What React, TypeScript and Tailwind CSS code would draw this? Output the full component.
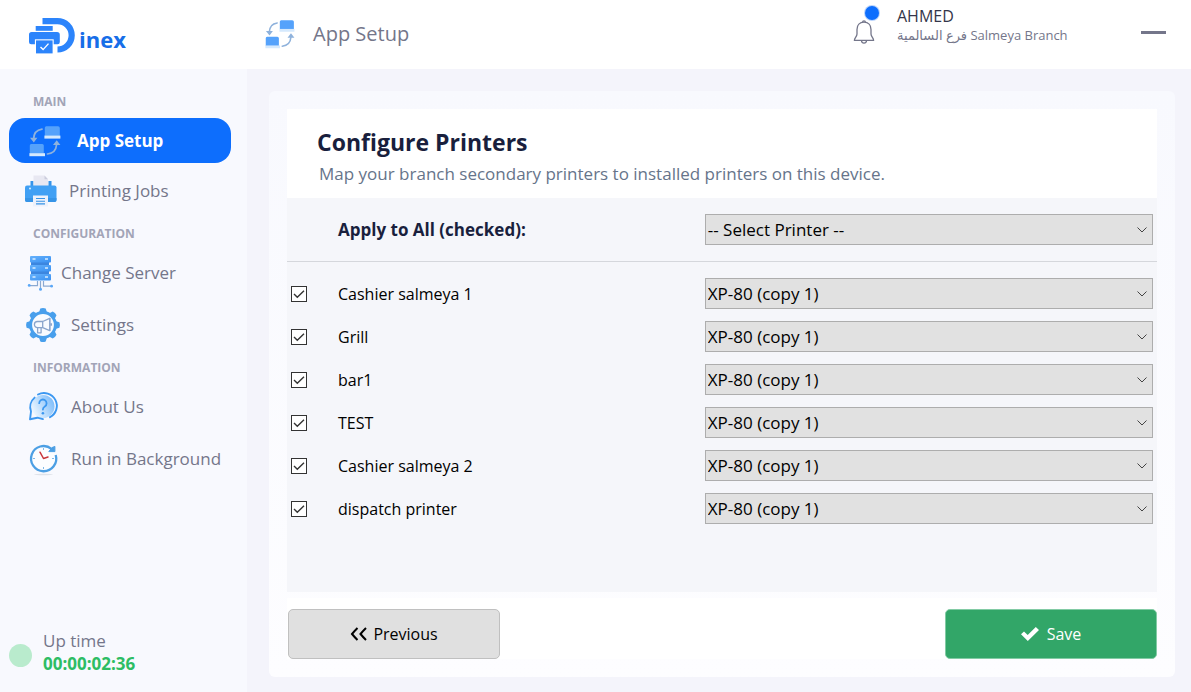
import React from 'react';

type IconProps = { className?: string };

function LogoMark({ className }: IconProps) {
  return (
    <svg viewBox="0 0 46 36" className={className} aria-hidden="true">
      <path d="M13.5 0H28.5a17.3 17.3 0 0 1 0 34.6V28.4a11.1 11.1 0 0 0 0-22.2H13.5Z" fill="#2c84fb" />
      <rect x="6.7" y="8" width="17" height="4.8" fill="#2c84fb" />
      <path d="M3 14H28a2.8 2.8 0 0 1 2.8 2.8V24a2.2 2.2 0 0 1-2.2 2.2H2.2A2.2 2.2 0 0 1 0 24V16.8A2.8 2.8 0 0 1 3 14Z" fill="#2c84fb" />
      <rect x="5.9" y="21.3" width="18.8" height="15" fill="#fff" />
      <rect x="7" y="22.4" width="16.6" height="13" fill="#2c84fb" />
      <path d="m11.5 29 2.6 2.6 5.4-6" fill="none" stroke="#fff" strokeWidth="1.4" />
    </svg>
  );
}

function TransferIcon({ className }: IconProps) {
  return (
    <svg viewBox="0 0 32 32" className={className} aria-hidden="true">
      <path d="M17 1.200h12a1.800 1.800 0 0 1 1.800 1.800v8H15.800V3A1.800 1.800 0 0 1 17 1.200Z" fill="#55a2fb" />
      <rect x="15.400" y="10.600" width="16" height="3" fill="#d5e9fd" />
      <path d="M2.200 19h11a1.600 1.600 0 0 1 1.600 1.600v8.200H.8v-8.200A1.600 1.600 0 0 1 2.200 19Z" fill="#55a2fb" />
      <rect x=".4" y="28.200" width="15.600" height="3" fill="#d5e9fd" />
      <path d="M13 4.200C7.600 5 4.800 8 4.600 14M18.400 29C24 28.400 27.200 25 27.600 19.500" fill="none" stroke="#8fb2dc" strokeWidth="1.700" strokeLinecap="round" />
      <path d="M1 12.800h7.400L4.800 17.600ZM24 20h7.400l-3.700-4.800Z" fill="#8fb2dc" />
    </svg>
  );
}

function PrinterIcon({ className }: IconProps) {
  return (
    <svg viewBox="0 0 32 32" className={className} aria-hidden="true">
      <path d="M5.500 6h3v5h-3ZM23.500 6h3v5h-3Z" fill="#3594ea" />
      <path d="M8.500.500h11L23 4.200V12H8.500Z" fill="#e8e8f2" />
      <path d="M19.500.500 23 4.200h-3.500Z" fill="#cccddd" />
      <rect x="0" y="10.500" width="31.500" height="16.500" rx="2" fill="#41a0f4" />
      <path d="M0 23h31.500v2a2 2 0 0 1-2 2H2a2 2 0 0 1-2-2Z" fill="#3694e7" />
      <circle cx="5" cy="13.500" r="1" fill="#d9efff" />
      <rect x="8" y="20.500" width="15" height="11" fill="#edf1fb" />
      <path d="M11 23.500h9M11 26.200h9M11 28.900h9" stroke="#3694e7" strokeWidth="1.100" />
    </svg>
  );
}

function ServerIcon({ className }: IconProps) {
  return (
    <svg viewBox="0 0 32 36" className={className} aria-hidden="true">
      <defs>
        <linearGradient id="server-fill" x1="0" x2="1" y1="0" y2="1">
          <stop offset="0" stopColor="#66b2fc" />
          <stop offset="1" stopColor="#3990f2" />
        </linearGradient>
      </defs>
      <path d="M6 5h18v16H6Z" fill="#3c86df" />
      {[1, 10, 19].map((y) => (
        <g key={y}>
          <rect x="5" y={y} width="21" height="6.4" rx="1" fill="url(#server-fill)" />
          <path d={`M7.5 ${y + 3}h3M20 ${y + 3}h3`} stroke="#d5ebff" strokeWidth="1.3" />
        </g>
      ))}
      <path d="M12.5 26v4.6H5M15.5 26v8M18.5 26v5.2H26" fill="none" stroke="#8aa9d2" strokeWidth="1.2" />
      <circle cx="4.2" cy="30.4" r="1.4" fill="#5aa7f7" />
      <circle cx="15.5" cy="34.2" r="1.5" fill="#5aa7f7" />
      <circle cx="26.6" cy="31.2" r="1.4" fill="#5aa7f7" />
    </svg>
  );
}

function SettingsIcon({ className }: IconProps) {
  return (
    <svg viewBox="0 0 36 36" className={className} aria-hidden="true">
      {[0, 45, 90, 135, 180, 225, 270, 315].map((angle) => (
        <path key={angle} d="M14 5.600 15.300 1.600Q18 .6 20.700 1.600L22 5.600Z" fill="#489fec" transform={`rotate(${angle} 18 18)`} />
      ))}
      <circle cx="18" cy="18" r="12.4" fill="#f8fbff" stroke="#489fec" strokeWidth="3" />
      <path d="M12.500 14.500h5.200v6.200h-5.200a3.100 3.100 0 0 1 0-6.200ZM17.700 14.500l7-3.200v12.400l-7-3M25 11v13M12.600 20.800v5h3.500v-5M26.400 16.200v2.600" fill="none" stroke="#8aa5cc" strokeWidth="1.300" strokeLinejoin="round" />
    </svg>
  );
}

function AboutIcon({ className }: IconProps) {
  return (
    <svg viewBox="0 0 36 36" className={className} aria-hidden="true">
      <defs>
        <linearGradient id="about-fill" x1="0" x2="1" y1=".7" y2=".2">
          <stop offset="0" stopColor="#f0f8ff" />
          <stop offset="1" stopColor="#78bafa" />
        </linearGradient>
      </defs>
      <circle cx="18" cy="17.500" r="11.500" fill="url(#about-fill)" />
      <path d="M13 5.500A12.600 12.600 0 0 1 25 28.200M9.600 8.600A12.600 12.600 0 0 0 6 22.500L5 30.300l7.300-1.600 5.700 1.400" fill="none" stroke="#3c98f1" strokeWidth="1.900" strokeLinecap="round" strokeLinejoin="round" />
      <path d="M14.200 14.200a3.700 3.700 0 1 1 5.600 3.200c-1.400.8-1.900 1.600-1.900 3.200" fill="none" stroke="#3c98f1" strokeWidth="1.800" strokeLinecap="round" />
      <circle cx="17.900" cy="24.200" r="1.300" fill="#3c98f1" />
    </svg>
  );
}

function ClockIcon({ className }: IconProps) {
  return (
    <svg viewBox="0 0 36 36" className={className} aria-hidden="true">
      <ellipse cx="18.500" cy="33.500" rx="9.500" ry=".8" fill="#dfe3ea" />
      <circle cx="18.500" cy="17.500" r="12" fill="#fcfdff" />
      <path d="M26.500 7.800a12.600 12.600 0 1 0 4.200 6.200" fill="none" stroke="#4c9fe4" strokeWidth="2.300" />
      <path d="M23.800 10.600 29.900 10.600 29.900 5.400 27 6.600Z" fill="#4c9fe4" stroke="#4c9fe4" />
      <path d="M18.500 7v2M18.500 26v2M8 17.500h2M27 17.500h2" stroke="#80b9e8" strokeWidth="1" />
      <path d="M15 11.200 18.500 17.500l4.500-1.500" fill="none" stroke="#c9373d" strokeWidth="1.500" strokeLinecap="round" strokeLinejoin="round" />
    </svg>
  );
}

function BellIcon({ className }: IconProps) {
  return (
    <svg viewBox="0 0 22 24" className={className} fill="none" stroke="#74768a" strokeWidth="1.3" strokeLinejoin="round" aria-hidden="true">
      <path d="M11 2.200c-4.300 0-7 3-7 7.200V14c0 2.600-2.600 4.200-2.600 6.400h19.200c0-2.200-2.600-3.800-2.600-6.400V9.400c0-4.200-2.700-7.200-7-7.200Z" />
      <path d="M9.600 2.200a1.400 1.400 0 0 1 2.800 0M8.500 20.600a2.500 2.500 0 0 0 5 0" />
    </svg>
  );
}

type NavItem = {
  label: string;
  Icon: React.ComponentType<IconProps>;
  iconClass: string;
  itemClass: string;
  active?: boolean;
};

const sections: { title: string; gapClass: string; items: NavItem[] }[] = [
  {
    title: 'MAIN',
    gapClass: 'gap-[5px]',
    items: [
      { label: 'App Setup', Icon: TransferIcon, iconClass: 'size-8', itemClass: 'pl-5 gap-4', active: true },
      { label: 'Printing Jobs', Icon: PrinterIcon, iconClass: 'size-8', itemClass: 'pl-4 gap-3' },
    ],
  },
  {
    title: 'CONFIGURATION',
    gapClass: 'gap-[7px]',
    items: [
      { label: 'Change Server', Icon: ServerIcon, iconClass: 'w-8 h-9', itemClass: 'pl-4 gap-1' },
      { label: 'Settings', Icon: SettingsIcon, iconClass: 'size-9', itemClass: 'pl-4 gap-2.5' },
    ],
  },
  {
    title: 'INFORMATION',
    gapClass: 'gap-[7px]',
    items: [
      { label: 'About Us', Icon: AboutIcon, iconClass: 'size-9', itemClass: 'pl-4 gap-2.5' },
      { label: 'Run in Background', Icon: ClockIcon, iconClass: 'size-9', itemClass: 'pl-4 gap-2.5' },
    ],
  },
];

const printers = ['Cashier salmeya 1', 'Grill', 'bar1', 'TEST', 'Cashier salmeya 2', 'dispatch printer'];

function PrinterSelect({ id, value }: { id: string; value: string }) {
  return (
    <div className="relative">
      <select
        id={id}
        defaultValue={value}
        className="block h-[31px] w-full appearance-none border border-[#adadad] bg-[#e1e1e1] pr-6 pl-0.5 text-[17px] leading-6 text-black"
      >
        <option>-- Select Printer --</option>
        <option>XP-80 (copy 1)</option>
      </select>
      <svg viewBox="0 0 10 6" className="pointer-events-none absolute top-[13px] right-1.5 h-1.5 w-2.5" fill="none" stroke="#444" aria-hidden="true">
        <path d="M.5.5 5 5 9.500.5" />
      </svg>
    </div>
  );
}

export default function App() {
  return (
    <div className="flex min-h-screen flex-col bg-[#f4f4fb] font-['Open_Sans','Noto_Sans','DejaVu_Sans',sans-serif] text-[#74768a]">
      <header className="flex h-[69px] items-start bg-white">
        <div className="flex w-[247px] shrink-0 pt-[18px] pl-[29px]">
          <LogoMark className="h-9 w-[46px]" />
          <span className="pt-[5px] pl-1 text-[22px] leading-8 font-bold text-[#176ee8]">inex</span>
        </div>
        <div className="flex flex-1 items-center gap-[18px] pt-[18px] pl-[18px]">
          <TransferIcon className="size-[30px]" />
          <span className="text-xl leading-8">App Setup</span>
        </div>
        <button type="button" aria-label="Notifications" className="relative mt-5 h-6 w-[22px]">
          <BellIcon className="h-6 w-[22px]" />
          <span className="absolute -top-3.5 left-3 size-3.5 rounded-full bg-[#0d6efd] ring-1 ring-[#b9d3fb]" />
        </button>
        <div className="w-[266px] pt-1.5 pl-[22px]">
          <div className="text-base leading-5 text-[#34364a]">AHMED</div>
          <div className="text-[13px] leading-[18px]" dir="ltr">فرع السالمية Salmeya Branch</div>
        </div>
        <button type="button" aria-label="Minimize" className="mr-[25px] flex h-16 w-[25px] items-center">
          <span className="h-[3px] w-full bg-[#74768a]" />
        </button>
      </header>

      <div className="flex flex-1">
        <aside className="flex w-[247px] shrink-0 flex-col bg-[#f8f9fe] pt-[23px] pb-[17px]">
          <nav className="flex flex-col gap-[11px] pr-4 pl-[9px]">
            {sections.map((section) => (
              <section key={section.title} className="flex flex-col gap-1.5">
                <h2 className="pl-6 text-xs leading-5 font-bold text-[#a2a4b7]">{section.title}</h2>
                <div className={`flex flex-col ${section.gapClass}`}>
                  {section.items.map(({ label, Icon, iconClass, itemClass, active }) => (
                    <a
                      key={label}
                      href="#"
                      className={`flex h-[45px] items-center rounded-2xl text-[17px] ${itemClass} ${active ? 'bg-[#0d6efd] font-bold text-white' : ''}`}
                    >
                      <Icon className={`shrink-0 ${iconClass}`} />
                      <span className="whitespace-nowrap">{label}</span>
                    </a>
                  ))}
                </div>
              </section>
            ))}
          </nav>
          <div className="mt-auto flex items-end gap-[11px] pl-[9px]">
            <span className="mb-2 size-[23px] rounded-full bg-[#b9ebcd]" />
            <div className="text-[17px] leading-[23px]">
              <div>Up time</div>
              <div className="font-bold text-[#2dbd64]">00:00:02:36</div>
            </div>
          </div>
        </aside>

        <main className="flex min-w-0 flex-1 flex-col px-4 pt-[22px] pb-[15px] pl-[22px]">
          <div className="flex flex-1 flex-col rounded-md bg-linear-to-b from-[#f8f9fe] to-[#fdfdff] p-[18px]">
            <div className="h-[89px] bg-white pt-[17px] pl-[30px]">
              <h1 className="text-[23px] leading-8 font-bold text-[#191f3d]">Configure Printers</h1>
              <p className="pl-0.5 text-[17px] leading-8 text-[#66748a]">
                Map your branch secondary printers to installed printers on this device.
              </p>
            </div>
            <div className="flex-1 bg-[#f5f6fa] text-base text-black">
              <div className="grid grid-cols-[47px_1fr_52%] items-center border-b border-[#d5d7dc] px-1 py-4">
                <label htmlFor="apply-all" className="col-start-2 text-[17px] leading-6 font-bold text-[#191f3d]">
                  Apply to All (checked):
                </label>
                <PrinterSelect id="apply-all" value="-- Select Printer --" />
              </div>
              <ul className="flex flex-col gap-3 px-1 py-4">
                {printers.map((name, index) => (
                  <li key={name} className="grid grid-cols-[47px_1fr_52%] items-center">
                    <span className="relative size-4">
                      <input
                        type="checkbox"
                        defaultChecked
                        aria-label={`Select ${name}`}
                        className="peer block size-4 appearance-none border border-[#333] bg-white"
                      />
                      <svg viewBox="0 0 16 16" className="pointer-events-none absolute inset-0 hidden size-4 peer-checked:block" fill="none" stroke="#333" strokeWidth="1.4" aria-hidden="true">
                        <path d="m3 8 3.300 3.300L13 4.800" />
                      </svg>
                    </span>
                    <label htmlFor={`printer-${index}`}>{name}</label>
                    <PrinterSelect id={`printer-${index}`} value="XP-80 (copy 1)" />
                  </li>
                ))}
              </ul>
            </div>
            <div className="mt-1.5 flex justify-between bg-white pt-[11px]">
              <button type="button" className="ml-px flex h-[50px] w-[212px] items-center justify-center gap-1.5 rounded-[5px] border border-[#c0c0c0] bg-[#e0e0e0] text-base text-black">
                <svg viewBox="0 0 17 14" className="h-3.5 w-[17px]" fill="none" stroke="#000" strokeWidth="2" aria-hidden="true">
                  <path d="M7.500 1Q4.500 4 2 7q2.500 3 5.500 6M16 1q-3 3-5.500 6 2.500 3 5.500 6" />
                </svg>
                Previous
              </button>
              <button type="button" className="flex h-[50px] w-[212px] items-center justify-center gap-2 rounded-[5px] border border-[#82cba4] bg-[#32a668] text-base text-white">
                <svg viewBox="0 0 18 14" className="h-3.5 w-[18px]" fill="#fff" aria-hidden="true">
                  <path d="M0 7.300 3 4.500l3.700 3.400L14.800 0 18 2.900 6.800 14Z" />
                </svg>
                Save
              </button>
            </div>
          </div>
        </main>
      </div>
    </div>
  );
}
